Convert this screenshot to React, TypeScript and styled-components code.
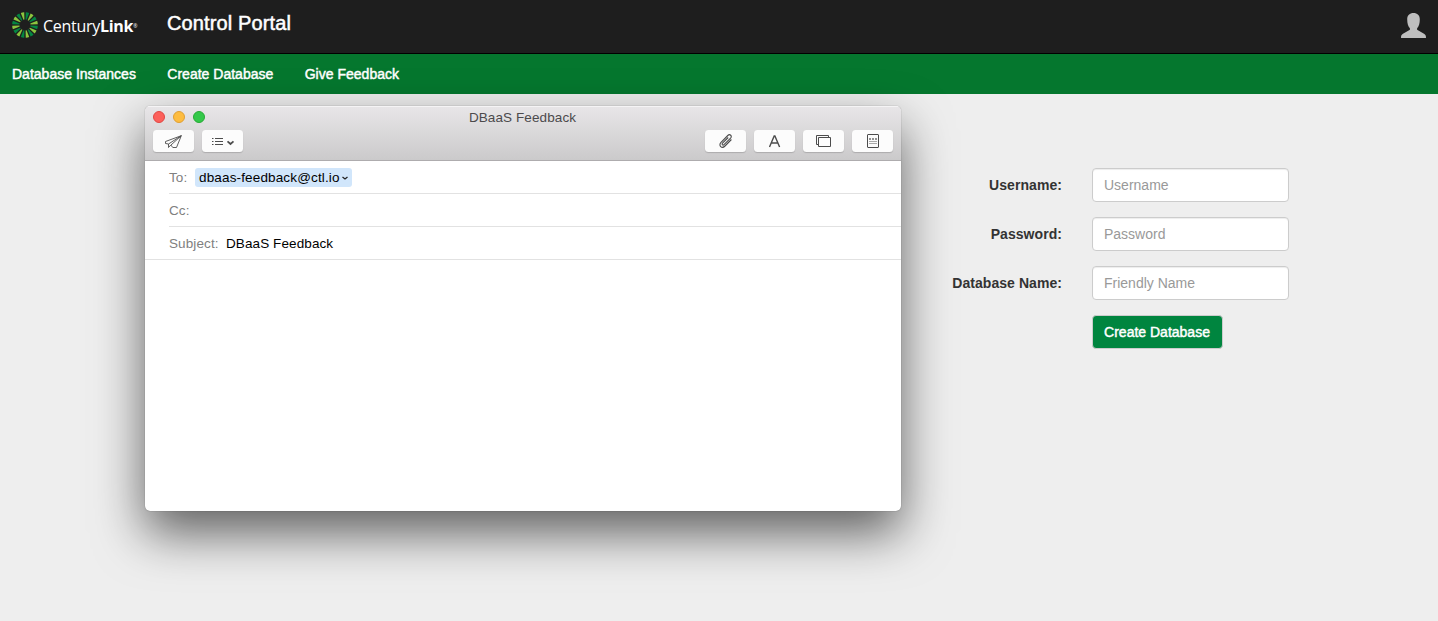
import React from "react";
import styled, { createGlobalStyle } from "styled-components";

const GlobalStyle = createGlobalStyle`
  * { box-sizing: border-box; }
  body { margin: 0; background: #eee; font: 14px/20px "Liberation Sans", Arial, sans-serif; color: #333; overflow: hidden; }
`;

const Page = styled.div`
  height: 621px;
  overflow: hidden;
`;
const TopBar = styled.header`
  display: flex;
  height: 54px;
  padding: 11px 12px 0 10.5px;
  background: #1e1e1e;
  border-bottom: 1px solid #000;
`;
const Brand = styled.div`
  display: flex;
  width: 156.5px;
  height: 28px;
`;
const BrandName = styled.span`
  margin: 4.5px 0 0 4.5px;
  color: #fff;
  font: 400 16px/20px "Open Sans", sans-serif;
  letter-spacing: -0.28px;
  white-space: nowrap;
  b { font-weight: 700; }
  small { font-size: 5px; vertical-align: 4px; }
`;
const PortalTitle = styled.h1`
  flex: 1;
  margin: 0;
  color: #fff;
  font-size: 20px;
  line-height: 24px;
  font-weight: 400;
  letter-spacing: 0.12px;
  -webkit-text-stroke: 0.5px #fff;
`;
const UserIcon = styled.svg`
  margin-top: 2px;
`;
const NavBar = styled.nav`
  display: flex;
  gap: 31.4px;
  height: 40px;
  padding: 10px 12px;
  background: #05772e;
`;
const NavLink = styled.a`
  color: #fff;
  letter-spacing: 0.01px;
  -webkit-text-stroke: 0.45px #fff;
`;
const Content = styled.main`
  display: flex;
  align-items: flex-start;
  padding: 12px 0 0 145px;
`;
const MailWindow = styled.section`
  width: 756px;
  height: 405px;
  flex: none;
  background: #fff;
  border-radius: 5px;
  overflow: hidden;
  font-size: 13.5px;
  letter-spacing: 0.1px;
  box-shadow: 0 0 1px rgba(0, 0, 0, 0.55), 0 22px 50px rgba(0, 0, 0, 0.6);
`;
const WindowHeader = styled.div`
  height: 55px;
  padding: 1px 8px 0;
  background: linear-gradient(#e8e6e8, #cbcacb);
  border-bottom: 1px solid #aeacae;
  box-shadow: inset 0 1px #f5f4f5;
`;
const TitleRow = styled.div`
  display: grid;
  grid-template-columns: 60px 1fr 60px;
  align-items: center;
  height: 20px;
  color: #4c4a4c;
  text-align: center;
  > span { margin: 1px 1px 0 0; line-height: 19px; }
`;
const Lights = styled.div`
  display: flex;
  gap: 8px;
`;
const Light = styled.i<{ $fill: string; $edge: string }>`
  width: 12px;
  height: 12px;
  border-radius: 50%;
  background: ${(p) => p.$fill};
  border: 1px solid ${(p) => p.$edge};
`;
const Toolbar = styled.div`
  display: flex;
  justify-content: space-between;
  margin-top: 3px;
`;
const ToolGroup = styled.div`
  display: flex;
  gap: 8px;
`;
const ToolButton = styled.button`
  width: 41px;
  height: 22px;
  padding: 0;
  border: 0;
  border-radius: 3.5px;
  background: #fcfcfc;
  box-shadow: 0 1px 1px rgba(0, 0, 0, 0.17);
  svg { display: block; fill: none; stroke: #4c4c4c; }
`;
const MailField = styled.div<{ $full?: boolean }>`
  display: flex;
  align-items: center;
  height: 33px;
  margin-left: ${(p) => (p.$full ? 0 : 24)}px;
  padding-top: 1px;
  padding-left: ${(p) => (p.$full ? 24 : 0)}px;
  border-bottom: 1px solid #e2e2e2;
  color: #000;
`;
const FieldName = styled.span<{ $width: number }>`
  width: ${(p) => p.$width}px;
  color: #808080;
`;
const Recipient = styled.span`
  display: flex;
  align-items: center;
  height: 19px;
  width: 157px;
  padding-left: 4px;
  border-radius: 3px;
  background: #d1e6fb;
  letter-spacing: 0.15px;
  svg { margin-left: 1px; }
`;
const Form = styled.form`
  display: grid;
  grid-template-columns: 161px 197px;
  column-gap: 30px;
  row-gap: 15px;
  padding-top: 62px;
`;
const Label = styled.label`
  padding-top: 7px;
  color: #333;
  font-weight: 700;
  text-align: right;
  letter-spacing: 0.06px;
`;
const Input = styled.input`
  width: 197px;
  height: 34px;
  padding: 6px 11px;
  border: 1px solid #ccc;
  border-radius: 4px;
  background: #fff;
  box-shadow: inset 0 1px 1px rgba(0, 0, 0, 0.075);
  font: inherit;
  &::placeholder { color: #999; opacity: 1; }
`;
const Submit = styled.button`
  grid-column: 2;
  justify-self: start;
  width: 131px;
  height: 34px;
  padding: 0 1px 0 0;
  border: 1px solid #ccc;
  border-radius: 4px;
  background: #00853f;
  color: #fff;
  font: inherit;
  -webkit-text-stroke: 0.45px #fff;
`;

const rays = Array.from({ length: 16 }, (_, i) => i);
const fields = ["Username", "Password", "Friendly Name"];
const labels = ["Username:", "Password:", "Database Name:"];

function Logo() {
  return (
    <svg width="28" height="28" viewBox="-14 -14 28 28">
      {rays.map((i) => (
        <path
          key={i}
          d="M-.5-5.500 L-1.750-12.700 Q0-13.100 1.750-12.700 L.5-5.500Z"
          fill={i % 2 ? "#8cc63f" : "#048641"}
          transform={`rotate(${i * 22.5 + 11.25})`}
        />
      ))}
    </svg>
  );
}

export default function App() {
  return (
    <Page>
      <GlobalStyle />
      <TopBar>
        <Brand>
          <Logo />
          <BrandName>Century<b>Link</b><small>®</small></BrandName>
        </Brand>
        <PortalTitle>Control Portal</PortalTitle>
        <UserIcon width="25" height="25" viewBox="0 0 25 25" fill="#bebebe">
          <path d="M12.5 0C8.7 0 6.2 2.300 6.2 6.2c0 4.3 1 7.300 2.700 9v1.600L2 20.700C.5 21.500 0 22.300 0 25h25c0-2.700-.5-3.500-2-4.300l-6.900-3.900v-1.600c1.700-1.700 2.700-4.700 2.700-9C18.800 2.300 16.300 0 12.500 0Z" />
        </UserIcon>
      </TopBar>
      <NavBar>
        <NavLink>Database Instances</NavLink>
        <NavLink>Create Database</NavLink>
        <NavLink>Give Feedback</NavLink>
      </NavBar>
      <Content>
        <MailWindow>
          <WindowHeader>
            <TitleRow>
              <Lights>
                <Light $fill="#fc605b" $edge="#df4744" />
                <Light $fill="#fdbc40" $edge="#de9f34" />
                <Light $fill="#34c84a" $edge="#27aa35" />
              </Lights>
              <span>DBaaS Feedback</span>
            </TitleRow>
            <Toolbar>
              <ToolGroup>
                <ToolButton aria-label="Send">
                  <svg width="41" height="22" strokeLinejoin="round">
                    <path d="M28.300 5.700 12.500 11.500v2l3 .5v3.500l2.300-2.500 2 2.500h3.700L28.300 5.700ZM28.300 5.700 15.500 14M28.300 5.700 18 15" strokeWidth=".9" />
                  </svg>
                </ToolButton>
                <ToolButton aria-label="Headers">
                  <svg width="41" height="22">
                    <path d="M10 8.500h1.500M10 11.500h1.500M10 14.500h1.500M13 8.500h8M13 11.500h8M13 14.500h8" />
                    <path d="m25.500 11.300 3 2.700 3-2.700" strokeWidth="1.700" />
                  </svg>
                </ToolButton>
              </ToolGroup>
              <ToolGroup>
                <ToolButton aria-label="Attach">
                  <svg width="41" height="22">
                    <path d="m23.200 7.500-5.700 5.700c-1.100 1.300.4 2.600 1.500 1.500l6.600-6.600c2-2.200-.8-4.600-2.800-2.600l-6.800 6.800c-3 3.200.9 6.900 4 3.700l6.400-6.500" strokeWidth="1.100" />
                  </svg>
                </ToolButton>
                <ToolButton aria-label="Format">
                  <svg width="41" height="22">
                    <path d="m15.500 17 4.700-11h.7l4.700 11M17.200 13h6.700" strokeWidth="1.400" />
                  </svg>
                </ToolButton>
                <ToolButton aria-label="Photos">
                  <svg width="41" height="22">
                    <path d="M15.500 14.500h-2v-9h12v2M15.500 7.500h12v9h-12Z" />
                  </svg>
                </ToolButton>
                <ToolButton aria-label="Stationery">
                  <svg width="41" height="22">
                    <rect x="15.500" y="4.500" width="11" height="13" rx=".5" />
                    <path d="M17 9h2m1 0h2m1 0h2" strokeWidth="2" stroke="#929292" />
                    <path d="M17 11.500h8M17 13.500h8" stroke="#aaa" />
                  </svg>
                </ToolButton>
              </ToolGroup>
            </Toolbar>
          </WindowHeader>
          <MailField>
            <FieldName $width={26}>To:</FieldName>
            <Recipient>
              dbaas-feedback@ctl.io
              <svg width="8" height="8" fill="none" stroke="#222" strokeWidth="1.300">
                <path d="m1.500 3 2.500 2 2.500-2" />
              </svg>
            </Recipient>
          </MailField>
          <MailField><FieldName $width={26}>Cc:</FieldName></MailField>
          <MailField $full><FieldName $width={57}>Subject:</FieldName>DBaaS Feedback</MailField>
        </MailWindow>
        <Form>
          {fields.map((name, i) => (
            <React.Fragment key={name}>
              <Label>{labels[i]}</Label>
              <Input placeholder={name} />
            </React.Fragment>
          ))}
          <Submit type="button">Create Database</Submit>
        </Form>
      </Content>
    </Page>
  );
}
